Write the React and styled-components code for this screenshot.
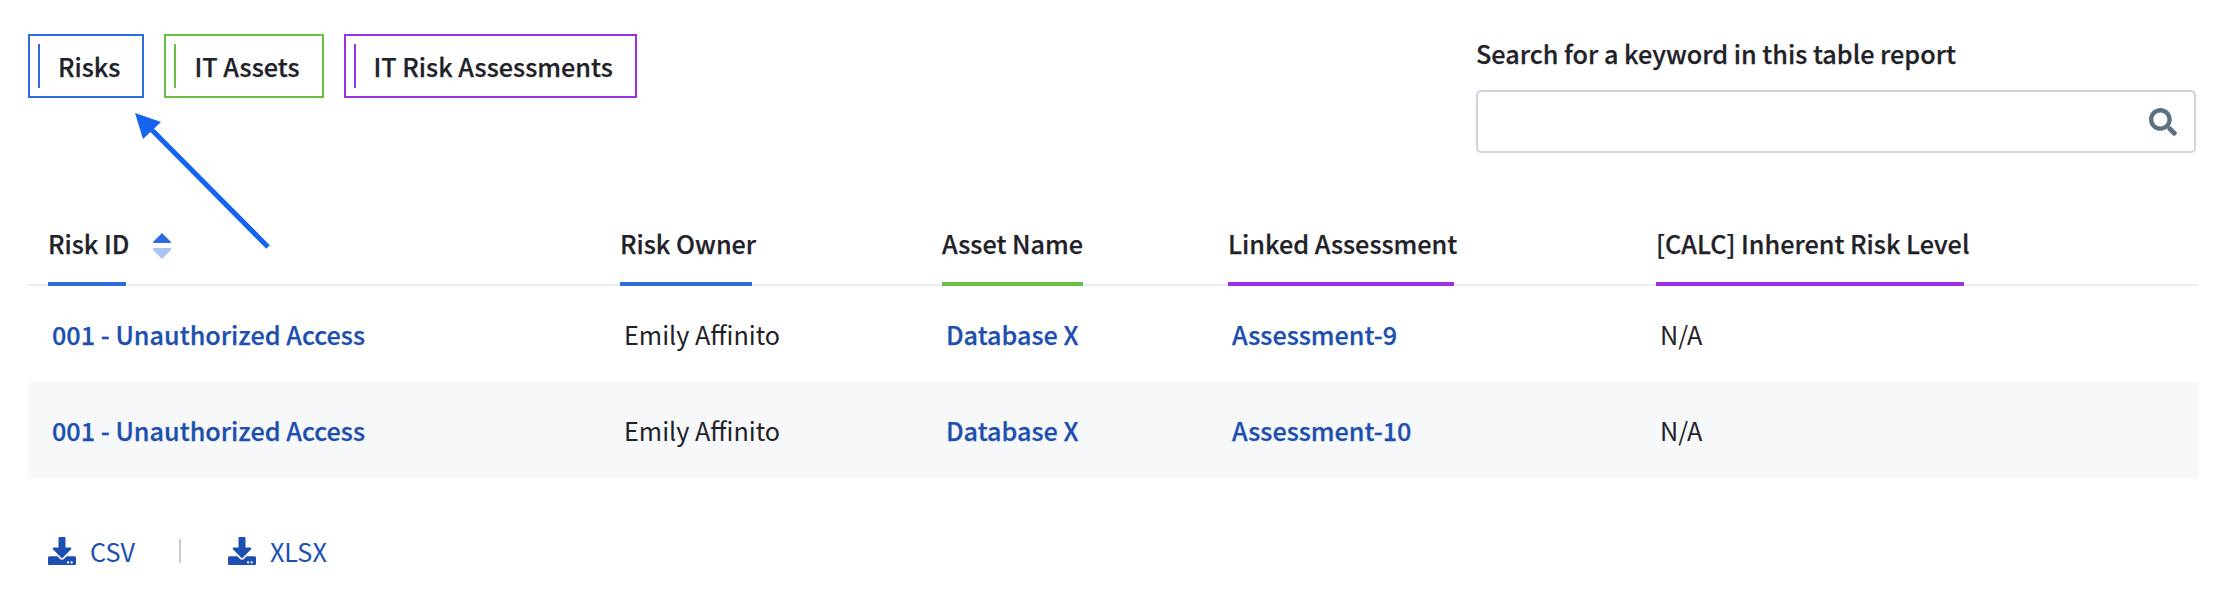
import React from "react";
import styled, { createGlobalStyle } from "styled-components";
import { FaDownload, FaSearch } from "react-icons/fa";

const BLUE = "#2d6be0";
const GREEN = "#6abf45";
const PURPLE = "#9b30e6";

const columns = [
  { label: "Risk ID", color: BLUE, bar: 78, sortable: true },
  { label: "Risk Owner", color: BLUE, bar: 132 },
  { label: "Asset Name", color: GREEN, bar: 141 },
  { label: "Linked Assessment", color: PURPLE, bar: 226 },
  { label: "[CALC] Inherent Risk Level", color: PURPLE, bar: 308 },
];

const rows = [
  { risk: "001 - Unauthorized Access", owner: "Emily Affinito", asset: "Database X", assessment: "Assessment-9", level: "N/A" },
  { risk: "001 - Unauthorized Access", owner: "Emily Affinito", asset: "Database X", assessment: "Assessment-10", level: "N/A" },
];

export default function App() {
  return (
    <Page>
      <GlobalStyle />
      <TopBar>
        <Tabs>
          <Tab $color={BLUE}>Risks</Tab>
          <Tab $color={GREEN}>IT Assets</Tab>
          <Tab $color={PURPLE}>IT Risk Assessments</Tab>
        </Tabs>
        <SearchBox>
          <SearchLabel>Search for a keyword in this table report</SearchLabel>
          <SearchField>
            <SearchInput type="text" />
            <FaSearch />
          </SearchField>
        </SearchBox>
      </TopBar>

      <HeaderRow>
        {columns.map((col) => (
          <HeaderCell key={col.label}>
            <HeaderLabel $color={col.color} $bar={col.bar}>{col.label}</HeaderLabel>
            {col.sortable && (
              <SortIcon viewBox="0 0 18 26" aria-hidden="true">
                <path d="M9 0 L18 9 Q18 10 17 10 L1 10 Q0 10 0 9 Z" fill="#2d6be0" />
                <path d="M0 15 L18 15 L18 17 L9 26 L0 17 Z" fill="#aac4f5" />
              </SortIcon>
            )}
          </HeaderCell>
        ))}
      </HeaderRow>

      {rows.map((row) => (
        <Row key={row.assessment}>
          <Cell><RowLink>{row.risk}</RowLink></Cell>
          <Cell>{row.owner}</Cell>
          <Cell><RowLink>{row.asset}</RowLink></Cell>
          <Cell><RowLink>{row.assessment}</RowLink></Cell>
          <Cell>{row.level}</Cell>
        </Row>
      ))}

      <Exports>
        <ExportLink><FaDownload />CSV</ExportLink>
        <ExportDivider />
        <ExportLink><FaDownload />XLSX</ExportLink>
      </Exports>

      <Arrow viewBox="0 0 140 140" aria-hidden="true">
        <line x1="134" y1="134" x2="18" y2="17" stroke="#1464f0" strokeWidth="5" />
        <polygon points="1,0 27,9 9,26" fill="#1464f0" />
      </Arrow>
    </Page>
  );
}

const GlobalStyle = createGlobalStyle`
  body {
    margin: 0;
    background: #fff;
  }
`;

const Page = styled.div`
  position: relative;
  width: 2226px;
  height: 610px;
  box-sizing: border-box;
  padding: 34px 28px 0;
  font-family: "Noto Sans CJK JP", "Noto Sans", sans-serif;
  font-size: 25.2px;
  color: #1f2229;
  overflow: hidden;
`;

const TopBar = styled.div`
  display: flex;
  justify-content: space-between;
  align-items: flex-start;
  height: 182px;
`;

const Tabs = styled.div`
  display: flex;
  gap: 20px;
`;

const Tab = styled.div`
  display: flex;
  align-items: center;
  height: 64px;
  box-sizing: border-box;
  padding: 0 22px 0 8px;
  border: 2px solid ${(p) => p.$color};
  font-weight: 500;
  -webkit-text-stroke: 0.25px currentColor;

  &::before {
    content: "";
    width: 2px;
    height: 44px;
    margin-right: 18px;
    background: ${(p) => p.$color};
  }
`;

const SearchBox = styled.div`
  width: 720px;
  margin-right: 2px;
`;

const SearchLabel = styled.div`
  height: 56px;
  line-height: 38px;
  font-weight: 500;
  -webkit-text-stroke: 0.25px currentColor;
`;

const SearchField = styled.div`
  display: flex;
  align-items: center;
  height: 63px;
  box-sizing: border-box;
  padding-right: 17px;
  border: 2px solid #d0d3de;
  border-radius: 5px;

  svg {
    width: 28px;
    height: 28px;
    color: #5b7083;
  }
`;

const SearchInput = styled.input`
  flex: 1;
  border: 0;
  outline: 0;
  background: transparent;
`;

const grid = `
  display: grid;
  grid-template-columns: 572px 322px 286px 428px 1fr;
  padding-left: 20px;
`;

const HeaderRow = styled.div`
  ${grid}
  height: 70px;
  box-sizing: border-box;
  border-bottom: 2px solid #e9edf3;
`;

const HeaderCell = styled.div`
  display: flex;
  align-items: flex-start;
  height: 70px;
  font-weight: 500;
  -webkit-text-stroke: 0.25px currentColor;
`;

const HeaderLabel = styled.div`
  width: ${(p) => p.$bar}px;
  height: 70px;
  box-sizing: border-box;
  line-height: 54px;
  white-space: nowrap;
  border-bottom: 4px solid ${(p) => p.$color};
`;

const SortIcon = styled.svg`
  width: 18px;
  height: 26px;
  margin: 17px 0 0 27px;
`;

const Row = styled.div`
  ${grid}
  align-items: center;
  height: 96px;

  &:nth-of-type(even) {
    background: #f7f8fa;
  }
`;

const Cell = styled.div`
  padding-left: 4px;
`;

const RowLink = styled.a`
  color: #1c4fb0;
  font-weight: 500;
  -webkit-text-stroke: 0.25px currentColor;
`;

const Exports = styled.div`
  display: flex;
  align-items: center;
  margin-top: 55px;
  padding-left: 20px;
`;

const ExportLink = styled.a`
  display: flex;
  align-items: center;
  gap: 14px;
  color: #1c4fb0;
  line-height: 36px;

  svg {
    width: 28px;
    height: 28px;
  }
`;

const ExportDivider = styled.div`
  width: 2px;
  height: 24px;
  margin: 0 47px 0 44px;
  background: #c9cbdd;
`;

const Arrow = styled.svg`
  position: absolute;
  left: 134px;
  top: 113px;
  width: 140px;
  height: 140px;
`;
